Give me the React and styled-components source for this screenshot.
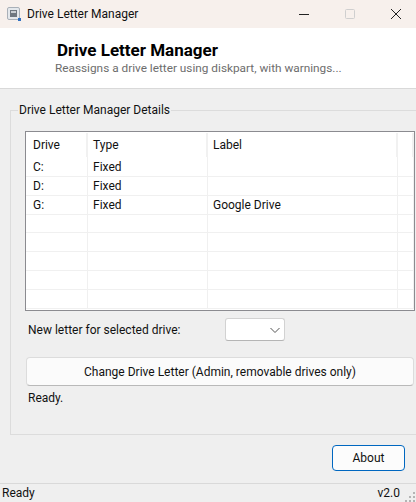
import React from 'react'
import styled, { createGlobalStyle } from 'styled-components'

const GlobalStyle = createGlobalStyle`
  html, body {
    margin: 0;
    padding: 0;
    background: #efefef;
  }
  body {
    font-family: Roboto, "Noto Sans", sans-serif;
    font-size: 12px;
    color: #111;
  }
`

const Window = styled.div`
  width: 416px;
  height: 502px;
  display: flex;
  flex-direction: column;
  overflow: hidden;
  background: #efefef;
`

const TitleBar = styled.div`
  height: 28px;
  flex: none;
  display: flex;
  align-items: center;
  background: #f7f0ec;
  padding-left: 7px;
`

const AppTitle = styled.span`
  margin-left: 6px;
  flex: 1;
`

const WindowButton = styled.div`
  width: 46px;
  height: 28px;
  flex: none;
  display: flex;
  align-items: center;
  justify-content: center;
  &:last-child {
    margin-right: -3px;
  }
`

const Banner = styled.div`
  height: 60px;
  flex: none;
  background: #fff;
  border-bottom: 1px solid #d9d9d9;
  padding-left: 55px;
  display: flex;
  flex-direction: column;
  justify-content: center;
`

const BannerTitle = styled.div`
  font-size: 17px;
  font-weight: 700;
  line-height: 20px;
  color: #000;
  margin-left: 2px;
`

const BannerText = styled.div`
  font-size: 11.8px;
  line-height: 16px;
  color: #6d6d6d;
`

const Group = styled.fieldset`
  flex: none;
  box-sizing: border-box;
  width: 412px;
  height: 333px;
  margin: 13px 0 0 10px;
  padding: 13px 0 0 14px;
  border: 1px solid #dcdcdc;
  min-width: 0;
`

const GroupTitle = styled.legend`
  margin-left: -7px;
  padding: 0 1px;
  line-height: 16px;
`

const Table = styled.div`
  width: 390px;
  box-sizing: border-box;
  height: 180px;
  border: 1px solid #8b8b90;
  background: #fff;
  overflow: hidden;
`

const Row = styled.div`
  display: grid;
  grid-template-columns: 62px 120px 190px 1fr;
  height: ${props => (props.$head ? '25px' : '19px')};
`

const Cell = styled.div`
  box-sizing: border-box;
  padding: 1px 0 0 5px;
  line-height: 18px;
  border-right: 1px solid #f0f0f0;
  border-bottom: 1px solid #f0f0f0;
  white-space: nowrap;
  &:first-child {
    padding-left: 7px;
  }
`

const HeadCell = styled.div`
  box-sizing: border-box;
  padding-left: 5px;
  line-height: 24px;
  margin-top: 1px;
  border-right: 2px solid #f1f1f1;
  &:first-child {
    padding-left: 7px;
  }
`

const LetterRow = styled.div`
  display: flex;
  align-items: center;
  height: 23px;
  margin-top: 7px;
  padding-left: 3px;
`

const LetterLabel = styled.div`
  width: 197px;
`

const Combo = styled.div`
  box-sizing: border-box;
  width: 60px;
  height: 23px;
  background: #fff;
  border: 1px solid #d2d2d2;
  border-bottom-color: #b5b5b5;
  border-radius: 3px;
  display: flex;
  align-items: center;
  justify-content: flex-end;
  padding-right: 3px;
`

const ActionButton = styled.div`
  box-sizing: border-box;
  width: 388px;
  height: 29px;
  margin: 16px 0 0 1px;
  background: #fbfbfb;
  border: 1px solid #dcdcdc;
  border-bottom-color: #b9b9b9;
  border-radius: 4px;
  display: flex;
  align-items: center;
  justify-content: center;
`

const StatusMessage = styled.div`
  margin: 4px 0 0 3px;
  line-height: 16px;
`

const Footer = styled.div`
  flex: 1;
  display: flex;
  justify-content: flex-end;
  padding: 10px 11px 0 0;
`

const AboutButton = styled.div`
  box-sizing: border-box;
  width: 73px;
  height: 26px;
  background: #fcfcfc;
  border: 1px solid #0067c0;
  border-radius: 4px;
  display: flex;
  align-items: center;
  justify-content: center;
`

const StatusBar = styled.div`
  height: 19px;
  flex: none;
  box-sizing: border-box;
  border-top: 1px solid #d9d9d9;
  display: flex;
  align-items: center;
  justify-content: space-between;
  padding: 0 16px 0 2px;
  position: relative;
`

const Grip = styled.svg`
  position: absolute;
  right: 0;
  bottom: 0;
`

const drives = [
  ['C:', 'Fixed', ''],
  ['D:', 'Fixed', ''],
  ['G:', 'Fixed', 'Google Drive'],
  ['', '', ''],
  ['', '', ''],
  ['', '', ''],
  ['', '', ''],
  ['', '', '']
]

export default () => (
  <Window>
    <GlobalStyle />
    <TitleBar>
      <svg width="14" height="14" viewBox="0 0 14 14">
        <rect x="0.5" y="0.5" width="12" height="12" rx="1.5" fill="#e4e8ec" stroke="#a9b0b8" />
        <rect x="3" y="3" width="7" height="7" fill="#6f7780" />
        <rect x="4" y="4" width="5" height="2" fill="#c9ced3" />
        <rect x="11" y="11" width="3" height="3" fill="#2f6fc0" />
      </svg>
      <AppTitle>Drive Letter Manager</AppTitle>
      <WindowButton>
        <svg width="10" height="10"><path d="M0 5.5h10" stroke="#222" /></svg>
      </WindowButton>
      <WindowButton>
        <svg width="10" height="10"><rect x="0.5" y="0.5" width="9" height="9" rx="1" fill="none" stroke="#cfcfcf" /></svg>
      </WindowButton>
      <WindowButton>
        <svg width="12" height="12"><path d="M1 1l10 10M11 1L1 11" stroke="#222" fill="none" /></svg>
      </WindowButton>
    </TitleBar>
    <Banner>
      <BannerTitle>Drive Letter Manager</BannerTitle>
      <BannerText>Reassigns a drive letter using diskpart, with warnings...</BannerText>
    </Banner>
    <Group>
      <GroupTitle>Drive Letter Manager Details</GroupTitle>
      <Table>
        <Row $head>
          <HeadCell>Drive</HeadCell>
          <HeadCell>Type</HeadCell>
          <HeadCell>Label</HeadCell>
          <HeadCell />
        </Row>
        {drives.map((drive, i) => (
          <Row key={i}>
            <Cell>{drive[0]}</Cell>
            <Cell>{drive[1]}</Cell>
            <Cell>{drive[2]}</Cell>
            <Cell />
          </Row>
        ))}
      </Table>
      <LetterRow>
        <LetterLabel>New letter for selected drive:</LetterLabel>
        <Combo>
          <svg width="12" height="12"><path d="M1.500 4l4.500 4.500L10.500 4" stroke="#555" fill="none" /></svg>
        </Combo>
      </LetterRow>
      <ActionButton>Change Drive Letter (Admin, removable drives only)</ActionButton>
      <StatusMessage>Ready.</StatusMessage>
    </Group>
    <Footer>
      <AboutButton>About</AboutButton>
    </Footer>
    <StatusBar>
      <span>Ready</span>
      <span>v2.0</span>
      <Grip width="12" height="12" fill="#b4b4b4">
        <rect x="9" y="2" width="2" height="2" />
        <rect x="9" y="6" width="2" height="2" />
        <rect x="5" y="6" width="2" height="2" />
        <rect x="9" y="10" width="2" height="2" />
        <rect x="5" y="10" width="2" height="2" />
        <rect x="1" y="10" width="2" height="2" />
      </Grip>
    </StatusBar>
  </Window>
)
